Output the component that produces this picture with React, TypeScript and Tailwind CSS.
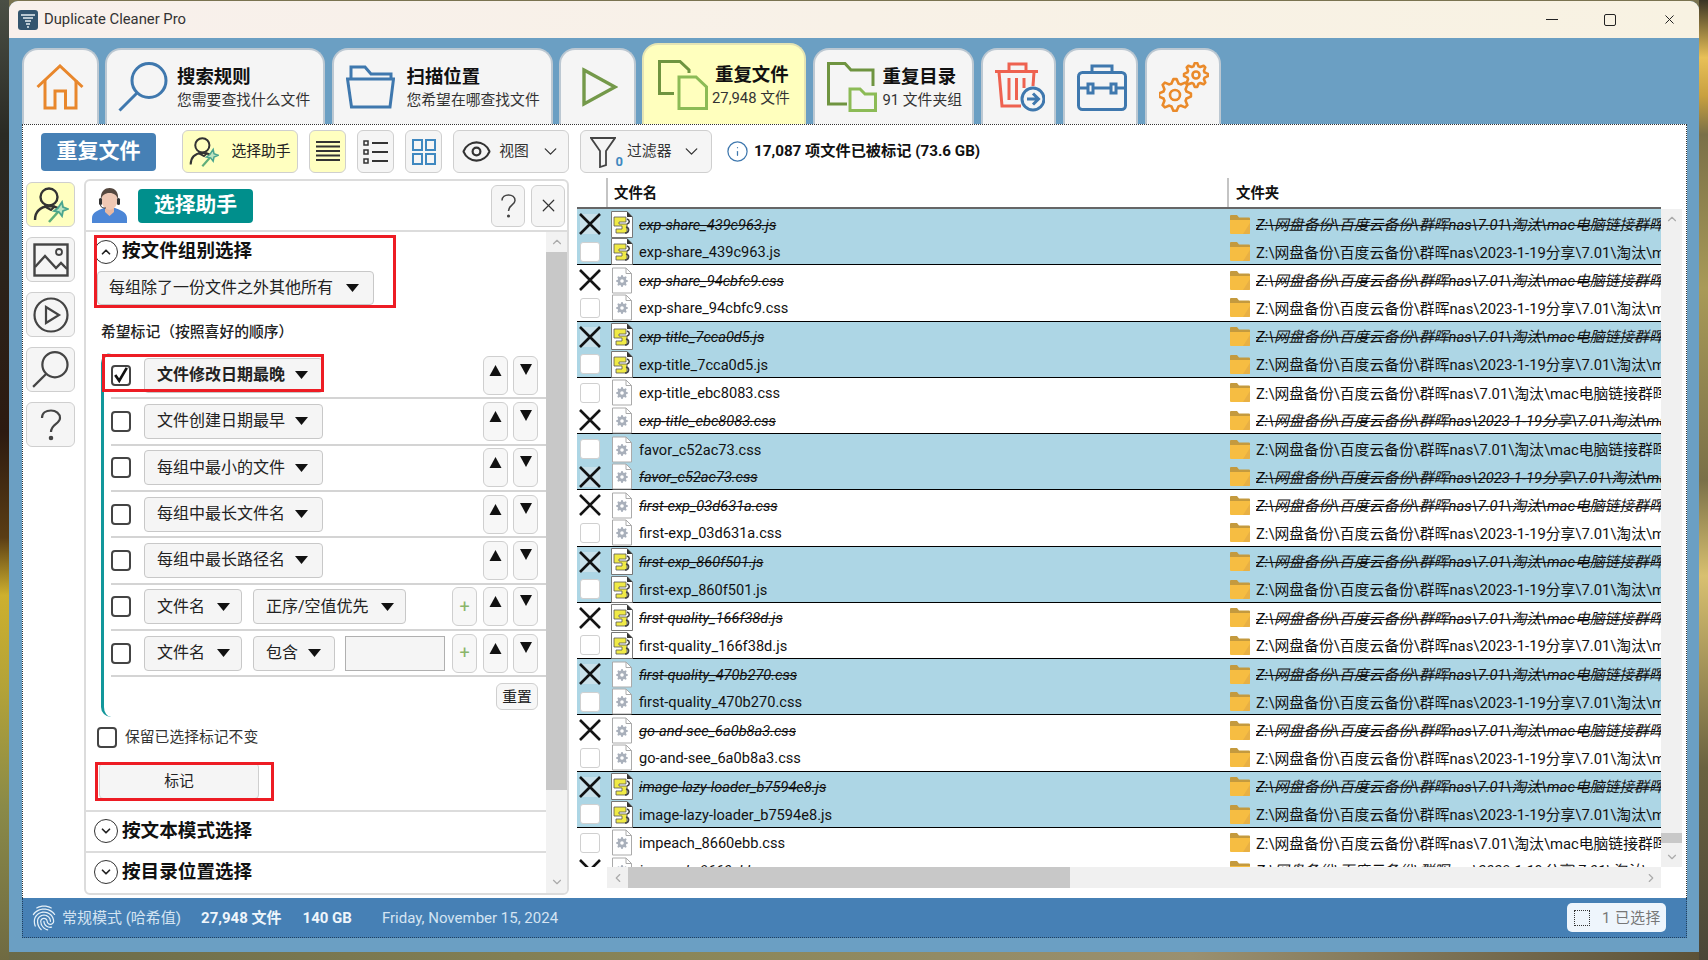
import { Eye, ChevronDown, ChevronUp, ChevronLeft, ChevronRight, X, Info } from "lucide-react";
import { MdFingerprint } from "react-icons/md";
import { ReactNode } from "react";

const gearPath = (cx: number, cy: number, r1: number, r2: number, teeth: number) => {
    const pts: string[] = [];
    const n = teeth * 4;
    for (let i = 0; i < n; i++) {
        const a = ((i - 0.5) / n) * Math.PI * 2;
        const r = i % 4 < 2 ? r2 : r1;
        pts.push(`${(cx + r * Math.cos(a)).toFixed(2)} ${(cy + r * Math.sin(a)).toFixed(2)}`);
    }
    return "M" + pts.join("L") + "Z";
};

const HomeIcon = () => (
    <svg width="48" height="46" viewBox="0 0 48 46" fill="none" stroke="#e8872c" strokeWidth="3">
        <path d="M1.5 23 L24 2 L46.5 23" />
        <path d="M9 16 V44 H19 V27 H29.5 V44 H40 V16" />
    </svg>
);

const SearchIcon = ({ color = "#3f78ae", size = 50, sw = 3 }: { color?: string; size?: number; sw?: number }) => (
    <svg width={size} height={size} viewBox="0 0 50 50" fill="none" stroke={color} strokeWidth={sw}>
        <circle cx="31" cy="18.5" r="17" />
        <path d="M19 31 L1.5 48.5" />
    </svg>
);

const FolderIcon = () => (
    <svg width="49" height="44" viewBox="0 0 49 44" fill="none" stroke="#3f78ae" strokeWidth="3">
        <path d="M5 13 V2 H19 L25 9 H45 V13" />
        <path d="M1.5 14 H47.5 L44 42 H5.5 Z" />
    </svg>
);

const PlayIcon = () => (
    <svg width="36" height="40" viewBox="0 0 36 40" fill="none" stroke="#74994a" strokeWidth="3.4">
        <path d="M2 3 L33 20 L2 37 Z" />
    </svg>
);

const DupFilesIcon = () => (
    <svg width="50" height="50" viewBox="0 0 50 50" fill="none" strokeWidth="3">
        <path d="M31 13 V10 L22 1.5 H1.5 V33.5 H16" stroke="#6f9440" />
        <path d="M21 17 H38 L48.5 27 V48.5 H21 Z" stroke="#8cbb56" />
    </svg>
);

const DupDirIcon = () => (
    <svg width="50" height="50" viewBox="0 0 50 50" fill="none" strokeWidth="3">
        <path d="M20 42 H1.5 V1.5 H18 L24 8 H46 V24" stroke="#6f9440" />
        <path d="M23 48.5 V27 H33 L38 32 H48.5 V48.5 Z" stroke="#8cbb56" />
    </svg>
);

const TrashIcon = () => (
    <svg width="50" height="50" viewBox="0 0 50 50" fill="none">
        <g stroke="#ee6250" strokeWidth="3">
            <path d="M14 9 V2 H31 V9" />
            <path d="M0 9.5 H43" />
            <path d="M4 10 L7 44 H26" />
            <path d="M39 10 L38 24" />
            <path d="M14 16 V38 M21.5 16 V38 M29 16 V26" />
        </g>
        <circle cx="38" cy="37" r="11" fill="#f5f5f5" stroke="#3f78ae" strokeWidth="3" />
        <path d="M32 37 H43 M38 31.5 L43.5 37 L38 42.5" stroke="#3f78ae" strokeWidth="3" />
    </svg>
);

const ToolboxIcon = () => (
    <svg width="50" height="47" viewBox="0 0 50 47" fill="none" stroke="#3f78ae" strokeWidth="3">
        <path d="M15 8 V2 H35 V8" />
        <rect x="1.5" y="8.5" width="47" height="37" rx="4" />
        <path d="M1.5 24 H48.5" />
        <rect x="11" y="20" width="5" height="9" fill="#f5f5f5" />
        <rect x="34" y="20" width="5" height="9" fill="#f5f5f5" />
    </svg>
);

const GearsIcon = () => (
    <svg width="50" height="50" viewBox="0 0 50 50" fill="none" stroke="#ea8a2a" strokeWidth="2.6" strokeLinejoin="round">
        <path d={gearPath(16, 33, 12, 16, 8)} fill="#f5f5f5" />
        <circle cx="16" cy="33" r="5" />
        <path d={gearPath(37, 13, 9, 12, 8)} fill="#f5f5f5" />
        <circle cx="37" cy="13" r="3.5" />
    </svg>
);

const WizardIcon = ({ size }: { size: number }) => (
    <svg width={size} height={size} viewBox="0 0 36 36" fill="none">
        <circle cx="16" cy="10" r="8.5" stroke="#333" strokeWidth="2.4" />
        <path d="M2 33 C2 24 7 20 16 19 C20 19 23 20 25 21" stroke="#333" strokeWidth="2.4" />
        <path d="M11 19 L18 23 L22 19" stroke="#333" strokeWidth="2.2" />
        <path d="M16 35 L25 25" stroke="#5fae7a" strokeWidth="2.6" />
        <path d="M29 15 L30 20 L35 22 L30 24 L29 29 L26 25 L21 24 L25 21 Z" stroke="#4aa58f" strokeWidth="1.8" fill="#bde3c0" />
    </svg>
);

const Avatar = () => (
    <svg width="35" height="35" viewBox="0 0 35 35">
        <path d="M0 35 V30 C0 24 7 22 12 20 H23 C28 22 35 24 35 30 V35 Z" fill="#4c86d6" />
        <path d="M13 19 H22 V24 L17.5 28 L13 24 Z" fill="#e9b9a2" />
        <ellipse cx="17.5" cy="12" rx="8" ry="10" fill="#efc8b4" />
        <path d="M9 12 C8 3 13 0 17.5 0 C23 0 27 4 26 12 C25 7 22 5 17.5 5 C13 5 10 7 9 12 Z" fill="#55483f" />
        <rect x="7" y="10" width="3" height="7" rx="1.5" fill="#333" />
        <rect x="25" y="10" width="3" height="7" rx="1.5" fill="#333" />
        <path d="M8.5 17 C9 20 12 20 14 20" stroke="#333" strokeWidth="1" fill="none" />
    </svg>
);

const Caret = () => (
    <svg width="13" height="8" viewBox="0 0 13 8" className="shrink-0"><path d="M0 0 H13 L6.5 8 Z" fill="#111" /></svg>
);

const Check = ({ checked }: { checked?: boolean }) => (
    <div className="w-[20px] h-[21px] shrink-0 rounded-[4px] border-2 border-[#444] bg-white flex items-center justify-center">
        {checked &&
            <svg width="18" height="18" viewBox="0 0 18 18" fill="none"><path d="M2.5 9 L7 15.5 L15.5 1" stroke="#111" strokeWidth="3" /></svg>
        }
    </div>
);

const Select = ({ label, w, gap, bold }: { label: string; w: string; gap: string; bold?: boolean }) => (
    <div className={`${w} h-[35px] shrink-0 rounded-[4px] border border-[#c8c8c8] bg-[#f5f5f5] flex items-center pl-[12px] text-[16px] text-[#222] ${bold ? "font-bold" : ""}`}>
        <span className={`${gap} whitespace-nowrap`}>{label}</span>
        <Caret />
    </div>
);

const SmallBtn = ({ children, className = "" }: { children: ReactNode; className?: string }) => (
    <div className={`w-[25px] h-[39px] shrink-0 rounded-[6px] border border-[#cfcfcf] bg-[#f7f7f7] flex justify-center ${className}`}>
        {children}
    </div>
);

const Arrows = () => (
    <div className="ml-[6px] mr-[8px] flex gap-[5px] shrink-0">
        <SmallBtn className="items-start"><svg width="13" height="12" viewBox="0 0 12 12" className="mt-[8px]"><path d="M6 0 L12 11 H0 Z" fill="#111" /></svg></SmallBtn>
        <SmallBtn className="items-start"><svg width="12" height="12" viewBox="0 0 12 12" className="mt-[7px]"><path d="M0 0 H12 L6 11 Z" fill="#111" /></svg></SmallBtn>
    </div>
);

const Plus = () => (
    <SmallBtn className="ml-auto items-center text-[#8ab56a] text-[18px] leading-none"><span>+</span></SmallBtn>
);

const Rule = ({ children, checked }: { children: ReactNode; checked?: boolean }) => (
    <div className="h-[46.33px] box-border border-b-2 border-[#d4d4d4] flex items-center">
        <Check checked={checked} />
        <div className="ml-[13px] flex-1 flex items-center">{children}</div>
    </div>
);

const SectionRow = ({ label, open }: { label: string; open?: boolean }) => (
    <div className="flex items-center pl-[8px] gap-[4px]">
        <div className="w-[24px] h-[24px] rounded-full border-[1.5px] border-[#333] flex items-center justify-center">
            {open ? <ChevronUp size={14} strokeWidth={3} color="#222" /> : <ChevronDown size={14} strokeWidth={3} color="#222" />}
        </div>
        <span className="text-[18.6px] font-bold text-[#111]">{label}</span>
    </div>
);

const Tab = ({ w, children, active }: { w: string; children: ReactNode; active?: boolean }) => (
    <div className={`${w} ${active ? "h-[81px] bg-[#ffffbe]" : "h-[76px] bg-[#f5f5f5] border-[#bcc8d2]"} shrink-0 rounded-t-[16px] border-2 border-b-0 ${active ? "border-[#e4e4b4]" : ""} flex items-center`}>
        {children}
    </div>
);

const TabText = ({ title, sub }: { title: string; sub: string }) => (
    <div className="flex flex-col items-start pt-[1px]">
        <span className="text-[18.4px] leading-[24px] font-bold text-[#111] whitespace-nowrap">{title}</span>
        <span className="text-[14.8px] leading-[20px] mt-[1px] text-[#333] whitespace-nowrap">{sub}</span>
    </div>
);

const ToolBtn = ({ w, yellow, children }: { w: string; yellow?: boolean; children: ReactNode }) => (
    <div className={`${w} h-[43px] shrink-0 rounded-[6px] border border-[#cfcfcf] ${yellow ? "bg-[#ffffc0]" : "bg-[#f5f5f5]"} flex items-center justify-center`}>
        {children}
    </div>
);

const RailBtn = ({ yellow, children }: { yellow?: boolean; children: ReactNode }) => (
    <div className={`w-[49px] h-[45px] rounded-[6px] border border-[#cfcfcf] ${yellow ? "bg-[#ffffc0]" : "bg-[#f5f5f5]"} flex items-center justify-center`}>
        {children}
    </div>
);

const JsIcon = () => (
    <svg width="22" height="27" viewBox="0 0 22 27" className="shrink-0">
        <path d="M0.5 0.5 H16 L21.5 6 V26.5 H0.5 Z" fill="#fff" stroke="#777" />
        <path d="M16 0.5 V6 H21.5 Z" fill="#333" />
        <path d="M3 6 H15 V11 H8 V13 H16 V22 H5 V18 H11 V15 H3 Z" fill="#f0ea46" stroke="#555" strokeWidth="0.8" />
        <path d="M16 8 C19 9 19 12 16 13 M15 16 C19 17 18 22 14 22" stroke="#444" strokeWidth="1.6" fill="none" />
    </svg>
);

const CssIcon = () => (
    <svg width="22" height="27" viewBox="0 0 22 27" className="shrink-0">
        <path d="M1.5 1 H15 L20.5 6.5 V26 H1.5 Z" fill="#fff" stroke="#aaa" />
        <path d="M15 1 V6.5 H20.5" fill="none" stroke="#aaa" />
        <path d={gearPath(11, 14, 4.4, 6, 8)} fill="#a9b0bb" />
        <circle cx="11" cy="14" r="1.8" fill="#fff" />
    </svg>
);

const RowFolder = () => (
    <svg width="20" height="19" viewBox="0 0 20 19" className="shrink-0">
        <path d="M0 1 Q0 0 1 0 H7 L9 2.5 H19 Q20 2.5 20 3.5 V6 H0 Z" fill="#c49a3e" />
        <path d="M0 5 H20 V18 Q20 19 19 19 H1 Q0 19 0 18 Z" fill="#f6bd42" />
        <path d="M13 19 L20 8 V18 Q20 19 19 19 Z" fill="#e8b044" />
    </svg>
);

const Box = ({ marked }: { marked: boolean }) => marked ? (
    <div className="w-[20px] h-[20px] shrink-0 bg-[#f2f2f2]/40 flex items-center justify-center">
        <svg width="22" height="22" viewBox="0 0 22 22" className="shrink-0"><path d="M1 1 L21 21 M21 1 L1 21" stroke="#111" strokeWidth="2.6" /></svg>
    </div>
) : (
    <div className="w-[20px] h-[20px] shrink-0 rounded-[3px] border border-[#d0d0d0] bg-white"></div>
);

const groups: { name: string; type: "js" | "css"; mark: number }[] = [
    { name: "exp-share_439c963.js", type: "js", mark: 0 },
    { name: "exp-share_94cbfc9.css", type: "css", mark: 0 },
    { name: "exp-title_7cca0d5.js", type: "js", mark: 0 },
    { name: "exp-title_ebc8083.css", type: "css", mark: 1 },
    { name: "favor_c52ac73.css", type: "css", mark: 1 },
    { name: "first-exp_03d631a.css", type: "css", mark: 0 },
    { name: "first-exp_860f501.js", type: "js", mark: 0 },
    { name: "first-quality_166f38d.js", type: "js", mark: 0 },
    { name: "first-quality_470b270.css", type: "css", mark: 0 },
    { name: "go-and-see_6a0b8a3.css", type: "css", mark: 0 },
    { name: "image-lazy-loader_b7594e8.js", type: "js", mark: 0 },
    { name: "impeach_8660ebb.css", type: "css", mark: 1 },
];

const pathA = "Z:\\网盘备份\\百度云备份\\群晖nas\\7.01\\淘汰\\mac电脑链接群晖nas\\assets\\static";
const pathB = "Z:\\网盘备份\\百度云备份\\群晖nas\\2023-1-19分享\\7.01\\淘汰\\mac电脑链接群晖nas\\assets";

const FileRow = ({ name, type, marked, path, last, blue }: { name: string; type: string; marked: boolean; path: string; last: boolean; blue: boolean }) => (
    <div className={`h-[28.13px] box-border pt-[2px] flex items-center ${blue ? "bg-[#add6e5]" : "bg-white"} ${last ? "border-b border-black" : ""} text-[#111] whitespace-nowrap`}>
        <div className="w-[34px] pl-[3px] shrink-0"><Box marked={marked} /></div>
        {type === "js" ? <JsIcon /> : <CssIcon />}
        <div className={`w-[597px] pl-[6px] pt-[3px] shrink-0 text-[14.6px] ${marked ? "italic line-through" : ""}`}>{name}</div>
        <RowFolder />
        <div className={`ml-[6px] pt-[2px] text-[14.8px] overflow-hidden ${marked ? "italic line-through" : ""}`}>{path}</div>
    </div>
);

const App = () => {
    return (
        <div className="w-[1708px] h-[960px] flex overflow-hidden bg-[#7a7350] font-['Roboto','Noto_Sans_CJK_SC',sans-serif]">
            <div className="w-[9px] shrink-0 bg-[linear-gradient(180deg,#4a4f45_0%,#2a2a24_14%,#2c1a10_45%,#5a3d14_56%,#cdb02e_62%,#b2a238_72%,#8a8a48_84%,#6f6a42_100%)]"></div>
            <div className="w-[1690px] shrink-0 flex flex-col">
                <div className="h-[951px] mt-px flex flex-col bg-[#6b9fc3] rounded-t-[9px] overflow-hidden">
                    <div className="h-[37px] shrink-0 flex items-center bg-[linear-gradient(90deg,#f8f0ec,#f8f2e2)] pl-[9px]">
                        <svg width="20" height="20" viewBox="0 0 20 20" className="shrink-0">
                            <rect width="20" height="20" rx="3" fill="#33556f" />
                            <path d="M3 5 H17 M5 8 H15 M7 11 H13 M8 14 H12 M9 17 H11" stroke="#e8eef2" strokeWidth="1.4" />
                        </svg>
                        <span className="ml-[6px] text-[14.8px] text-[#333]">Duplicate Cleaner Pro</span>
                        <div className="ml-auto flex items-center pr-[22px] gap-[46px]">
                            <div className="w-[12px] h-[1.5px] bg-[#222]"></div>
                            <div className="w-[12px] h-[12px] rounded-[2px] border-[1.5px] border-[#222]"></div>
                            <X size={15} strokeWidth={1.6} color="#222" />
                        </div>
                    </div>

                    <div className="h-[86px] shrink-0 flex items-end pl-[13px] gap-[6.5px]">
                        <Tab w="w-[76.5px]"><div className="ml-[12px]"><HomeIcon /></div></Tab>
                        <Tab w="w-[220px]">
                            <div className="ml-[11px]"><SearchIcon /></div>
                            <div className="ml-[9px]"><TabText title="搜索规则" sub="您需要查找什么文件" /></div>
                        </Tab>
                        <Tab w="w-[221px]">
                            <div className="ml-[12px]"><FolderIcon /></div>
                            <div className="ml-[12px]"><TabText title="扫描位置" sub="您希望在哪查找文件" /></div>
                        </Tab>
                        <Tab w="w-[76.5px]"><div className="ml-[21px]"><PlayIcon /></div></Tab>
                        <Tab w="w-[164px]" active>
                            <div className="ml-[14px]"><DupFilesIcon /></div>
                            <div className="ml-[7px]">
                                <div className="flex flex-col items-start pt-[1px]">
                                    <span className="text-[18.4px] leading-[24px] font-bold text-[#111] whitespace-nowrap">重复文件</span>
                                    <span className="text-[14.8px] leading-[20px] mt-[1px] -ml-[3px] text-[#333] whitespace-nowrap">27,948 文件</span>
                                </div>
                            </div>
                        </Tab>
                        <Tab w="w-[161.5px]">
                            <div className="ml-[12px]"><DupDirIcon /></div>
                            <div className="ml-[6px]"><TabText title="重复目录" sub="91 文件夹组" /></div>
                        </Tab>
                        <Tab w="w-[75.5px]"><div className="ml-[12px]"><TrashIcon /></div></Tab>
                        <Tab w="w-[75.5px]"><div className="ml-[12px]"><ToolboxIcon /></div></Tab>
                        <Tab w="w-[76.5px]"><div className="ml-[12px]"><GearsIcon /></div></Tab>
                    </div>

                    <div className="ml-[13px] mr-[12px] h-[774px] shrink-0 bg-white border border-b-0 border-dotted border-[#333] flex flex-col">
                        <div className="h-[54px] shrink-0 flex items-center pl-[18px] pb-[1px]">
                            <div className="w-[115px] h-[38px] rounded-[4px] bg-[#4680b5] text-white text-[21px] font-bold flex items-center justify-center">重复文件</div>
                            <div className="ml-[26px]">
                                <ToolBtn w="w-[116px]" yellow>
                                    <WizardIcon size={30} />
                                    <span className="ml-[12px] text-[14.8px] text-[#222]">选择助手</span>
                                </ToolBtn>
                            </div>
                            <div className="ml-[11px]">
                                <ToolBtn w="w-[37px]" yellow>
                                    <svg width="26" height="24" viewBox="0 0 26 24" stroke="#333" strokeWidth="2">
                                        <path d="M1 2 H25 M1 6.5 H25 M1 11 H25 M1 15.5 H25 M1 20 H25" />
                                    </svg>
                                </ToolBtn>
                            </div>
                            <div className="ml-[11px]">
                                <ToolBtn w="w-[37px]">
                                    <svg width="26" height="26" viewBox="0 0 26 26" stroke="#333" fill="none" strokeWidth="2">
                                        <rect x="1" y="2" width="4" height="4" strokeWidth="1.5" /><path d="M9 4 H25" />
                                        <rect x="1" y="11" width="4" height="4" strokeWidth="1.5" /><path d="M9 13 H25" />
                                        <rect x="1" y="20" width="4" height="4" strokeWidth="1.5" /><path d="M9 22 H25" />
                                    </svg>
                                </ToolBtn>
                            </div>
                            <div className="ml-[11px]">
                                <ToolBtn w="w-[37px]">
                                    <svg width="24" height="26" viewBox="0 0 24 26" stroke="#3f88c0" fill="none" strokeWidth="2">
                                        <rect x="1" y="1" width="9" height="10" /><rect x="14" y="1" width="9" height="10" />
                                        <rect x="1" y="15" width="9" height="10" /><rect x="14" y="15" width="9" height="10" />
                                    </svg>
                                </ToolBtn>
                            </div>
                            <div className="ml-[11px]">
                                <ToolBtn w="w-[116px]">
                                    <Eye size={31} strokeWidth={1.7} color="#333" />
                                    <span className="ml-[7px] text-[14.8px] text-[#333]">视图</span>
                                    <ChevronDown size={21} strokeWidth={1.5} color="#333" className="ml-[11px]" />
                                </ToolBtn>
                            </div>
                            <div className="ml-[11px]">
                                <ToolBtn w="w-[132px]">
                                    <svg width="26" height="32" viewBox="0 0 26 32" fill="none" stroke="#444" strokeWidth="1.8">
                                        <path d="M1 2 H25 L16 15 V29 L10 31 V15 Z" />
                                    </svg>
                                    <span className="text-[13px] font-bold text-[#3f88c0] leading-none self-end mb-[4px]">0</span>
                                    <span className="ml-[4px] text-[14.8px] text-[#333]">过滤器</span>
                                    <ChevronDown size={21} strokeWidth={1.5} color="#333" className="ml-[10px]" />
                                </ToolBtn>
                            </div>
                            <Info size={23} strokeWidth={1.3} color="#3f78ae" className="ml-[14px]" />
                            <span className="ml-[5px] text-[15.2px] font-bold text-[#111] whitespace-nowrap">17,087 项文件已被标记 (73.6 GB)</span>
                        </div>

                        <div className="flex-1 min-h-0 flex">
                            <div className="w-[61px] shrink-0 pt-[3px] pl-[3px] flex flex-col gap-[10px]">
                                <RailBtn yellow><WizardIcon size={36} /></RailBtn>
                                <RailBtn>
                                    <svg width="36" height="34" viewBox="0 0 36 34" fill="none" stroke="#444" strokeWidth="2.4">
                                        <rect x="1.5" y="1.5" width="33" height="31" />
                                        <path d="M2 24 L12 13 L23 25 L28 20 L34 26" />
                                        <circle cx="26" cy="9" r="3" strokeWidth="1.8" />
                                    </svg>
                                </RailBtn>
                                <RailBtn>
                                    <svg width="36" height="36" viewBox="0 0 36 36" fill="none" stroke="#444" strokeWidth="2.2">
                                        <circle cx="18" cy="18" r="16.5" />
                                        <path d="M13 10 L26 18 L13 26 Z" />
                                    </svg>
                                </RailBtn>
                                <RailBtn><SearchIcon color="#444" size={37} sw={3} /></RailBtn>
                                <RailBtn>
                                    <svg width="22" height="32" viewBox="0 0 22 32" fill="none" stroke="#444" strokeWidth="2.2">
                                        <path d="M2 9 C2 4 6 1.5 11 1.5 C16 1.5 20 4.5 20 9 C20 15 11 15 11 23" />
                                        <circle cx="11" cy="29" r="1.2" fill="#444" />
                                    </svg>
                                </RailBtn>
                            </div>

                            <div className="w-[485px] shrink-0 mb-[3px] rounded-[6px] border-2 border-[#dcdcdc] flex flex-col overflow-hidden">
                                <div className="h-[51px] shrink-0 border-b-2 border-[#dcdcdc] flex items-center pl-[6px]">
                                    <Avatar />
                                    <div className="ml-[11px] w-[115px] h-[34px] rounded-[4px] bg-[#008f8c] text-white text-[20.8px] font-bold flex items-center justify-center">选择助手</div>
                                    <div className="ml-auto flex gap-[6px] pr-[2px]">
                                        <div className="w-[34px] h-[42px] rounded-[6px] border border-[#cfcfcf] bg-[#f5f5f5] flex items-center justify-center">
                                            <svg width="15" height="24" viewBox="0 0 15 24" fill="none" stroke="#444" strokeWidth="1.5">
                                                <path d="M1 6.5 C1 3 4 1 7.5 1 C11 1 14 3 14 6.5 C14 11 7.5 11 7.5 17" />
                                                <circle cx="7.5" cy="22" r="0.8" fill="#444" />
                                            </svg>
                                        </div>
                                        <div className="w-[34px] h-[42px] rounded-[6px] border border-[#cfcfcf] bg-[#f5f5f5] flex items-center justify-center"><X size={21} strokeWidth={1.4} color="#333" /></div>
                                    </div>
                                </div>

                                <div className="flex-1 min-h-0 flex relative">
                                    <div className="w-[460px] shrink-0 flex flex-col">
                                        <div className="h-[40px] shrink-0 flex items-center"><SectionRow label="按文件组别选择" open /></div>
                                        <div className="ml-[11px] w-[277px] h-[34px] shrink-0 -mt-[1px] rounded-[4px] border border-[#c8c8c8] bg-[#f5f5f5] flex items-center pl-[11px] gap-[13px] text-[16px] text-[#222] whitespace-nowrap">
                                            每组除了一份文件之外其他所有<Caret />
                                        </div>
                                        <div className="ml-[15px] mt-[17px] h-[20px] shrink-0 flex items-center text-[14.8px] font-medium text-[#222]">希望标记（按照喜好的顺序）</div>
                                        <div className="ml-[15px] mt-[11px] h-[364px] shrink-0 pl-[7px] border-l-[3px] border-[#12979b] rounded-l-[10px]">
                                            <Rule checked><Select label="文件修改日期最晚" w="w-[179px]" gap="mr-[10px]" bold /><div className="ml-auto"><Arrows /></div></Rule>
                                            <Rule><Select label="文件创建日期最早" w="w-[179px]" gap="mr-[10px]" /><div className="ml-auto"><Arrows /></div></Rule>
                                            <Rule><Select label="每组中最小的文件" w="w-[179px]" gap="mr-[10px]" /><div className="ml-auto"><Arrows /></div></Rule>
                                            <Rule><Select label="每组中最长文件名" w="w-[179px]" gap="mr-[10px]" /><div className="ml-auto"><Arrows /></div></Rule>
                                            <Rule><Select label="每组中最长路径名" w="w-[179px]" gap="mr-[10px]" /><div className="ml-auto"><Arrows /></div></Rule>
                                            <Rule>
                                                <Select label="文件名" w="w-[98px]" gap="mr-[12px]" />
                                                <div className="ml-[11px]"><Select label="正序/空值优先" w="w-[153px]" gap="mr-[12px]" /></div>
                                                <Plus /><Arrows />
                                            </Rule>
                                            <Rule>
                                                <Select label="文件名" w="w-[98px]" gap="mr-[12px]" />
                                                <div className="ml-[11px]"><Select label="包含" w="w-[82px]" gap="mr-[10px]" /></div>
                                                <div className="ml-[10px] w-[100px] h-[35px] border border-[#b0b0b0] bg-[#f5f5f5] shrink-0"></div>
                                                <Plus /><Arrows />
                                            </Rule>
                                            <div className="mt-[6px] flex justify-end pr-[8px]">
                                                <div className="w-[42px] h-[27px] rounded-[6px] border border-[#cfcfcf] bg-[#f7f7f7] flex items-center justify-center text-[14.8px] text-[#222]">重置</div>
                                            </div>
                                        </div>
                                        <div className="ml-[11px] mt-[10px] h-[20px] shrink-0 flex items-center gap-[8px]">
                                            <Check />
                                            <span className="text-[14.8px] text-[#333] whitespace-nowrap">保留已选择标记不变</span>
                                        </div>
                                        <div className="ml-[13px] mt-[16px] w-[160px] h-[36px] shrink-0 rounded-[4px] border border-[#cfcfcf] bg-[#f5f5f5] flex items-center justify-center text-[14.8px] text-[#222]">标记</div>
                                        <div className="mt-[11px] h-[41px] shrink-0 border-t-2 border-[#dcdcdc] flex items-center"><SectionRow label="按文本模式选择" /></div>
                                        <div className="h-[41px] shrink-0 border-t-2 border-[#dcdcdc] flex items-center"><SectionRow label="按目录位置选择" /></div>
                                    </div>
                                    <div className="w-[21px] shrink-0 flex flex-col bg-[#f2f2f2]">
                                        <div className="h-[20px] shrink-0 flex items-center justify-center"><ChevronUp size={14} color="#aaa" /></div>
                                        <div className="h-[538px] shrink-0 bg-[#c8c8c8]"></div>
                                        <div className="mt-auto h-[22px] flex items-center justify-center"><ChevronDown size={14} color="#aaa" /></div>
                                    </div>
                                    <div className="absolute left-[8px] top-[3px] w-[302px] h-[73px] border-[3px] border-[#ed1c24]"></div>
                                    <div className="absolute left-[16px] top-[122px] w-[222px] h-[38px] border-[3px] border-[#ed1c24]"></div>
                                    <div className="absolute left-[9px] top-[530px] w-[179px] h-[39px] border-[3px] border-[#ed1c24]"></div>
                                </div>
                            </div>

                            <div className="ml-[8px] w-[1105px] shrink-0 flex flex-col">
                                <div className="w-[1084px] h-[30px] shrink-0 box-border border-b-2 border-[#666] flex items-end text-[14.4px] font-bold text-[#111]">
                                    <div className="w-[29px] h-[29px] shrink-0"></div>
                                    <div className="w-[621px] h-[29px] shrink-0 border-l-2 border-[#c4c4c4] pl-[6px] pt-[2px] flex items-center">文件名</div>
                                    <div className="h-[29px] flex-1 border-l-2 border-[#c4c4c4] pl-[7px] pt-[2px] flex items-center">文件夹</div>
                                </div>
                                <div className="h-[658px] shrink-0 flex">
                                    <div className="w-[1084px] shrink-0 overflow-hidden">
                                        {groups.flatMap((g, gi) => [0, 1].map((r) => (
                                            <FileRow
                                                key={g.name + r}
                                                name={g.name}
                                                type={g.type}
                                                marked={g.mark === r}
                                                path={r === 0 ? pathA : pathB}
                                                last={r === 1}
                                                blue={gi % 2 === 0}
                                            />
                                        )))}
                                    </div>
                                    <div className="w-[21px] shrink-0 flex flex-col bg-[#f0f0f0]">
                                        <div className="h-[20px] flex items-center justify-center"><ChevronUp size={14} color="#aaa" /></div>
                                        <div className="mt-[604px] h-[10px] bg-[#c8c8c8]"></div>
                                        <div className="mt-auto h-[20px] flex items-center justify-center"><ChevronDown size={14} color="#aaa" /></div>
                                    </div>
                                </div>
                                <div className="ml-[30px] w-[1054px] h-[21px] shrink-0 bg-[#f0f0f0] flex">
                                    <div className="w-[21px] flex items-center justify-center"><ChevronLeft size={14} color="#aaa" /></div>
                                    <div className="w-[442px] bg-[#c8c8c8]"></div>
                                    <div className="ml-auto w-[21px] flex items-center justify-center"><ChevronRight size={14} color="#aaa" /></div>
                                </div>
                            </div>
                        </div>
                    </div>

                    <div className="ml-[13px] mr-[12px] h-[40px] shrink-0 bg-[#4680b5] border border-t-0 border-dotted border-[#22405c] flex items-center pl-[6px] text-[15px] whitespace-nowrap">
                        <MdFingerprint size={30} color="#e6f0f8" />
                        <span className="ml-[3px] pt-[2px] text-[#d4e4f2]">常规模式 (哈希值)</span>
                        <span className="ml-[20px] pt-[2px] font-bold text-[#eef5fb]">27,948 文件</span>
                        <span className="ml-[21px] pt-[2px] font-bold text-[#eef5fb]">140 GB</span>
                        <span className="ml-[30px] pt-[2px] text-[#d4e4f2]">Friday, November 15, 2024</span>
                        <div className="ml-auto mr-[20px] w-[99px] h-[29px] rounded-[5px] bg-[#eef5fc] flex items-center pl-[7px] text-[#777]">
                            <div className="w-[16px] h-[16px] border border-dotted border-[#333]"></div>
                            <span className="ml-[12px] pt-[1px] text-[14.8px] tracking-[0.5px]">1 已选择</span>
                        </div>
                    </div>
                </div>
                <div className="flex-1 bg-[linear-gradient(90deg,#6a6a48,#8a8658_40%,#9a9070_70%,#5c5238)]"></div>
            </div>
            <div className="w-[9px] shrink-0 bg-[linear-gradient(180deg,#3a3424_0%,#e8c058_6%,#c8a040_10%,#7a7048_14%,#a89a58_30%,#7a7048_50%,#d8c070_60%,#6a6240_80%,#4a4638_100%)]"></div>
        </div>
    );
};

export default App;
